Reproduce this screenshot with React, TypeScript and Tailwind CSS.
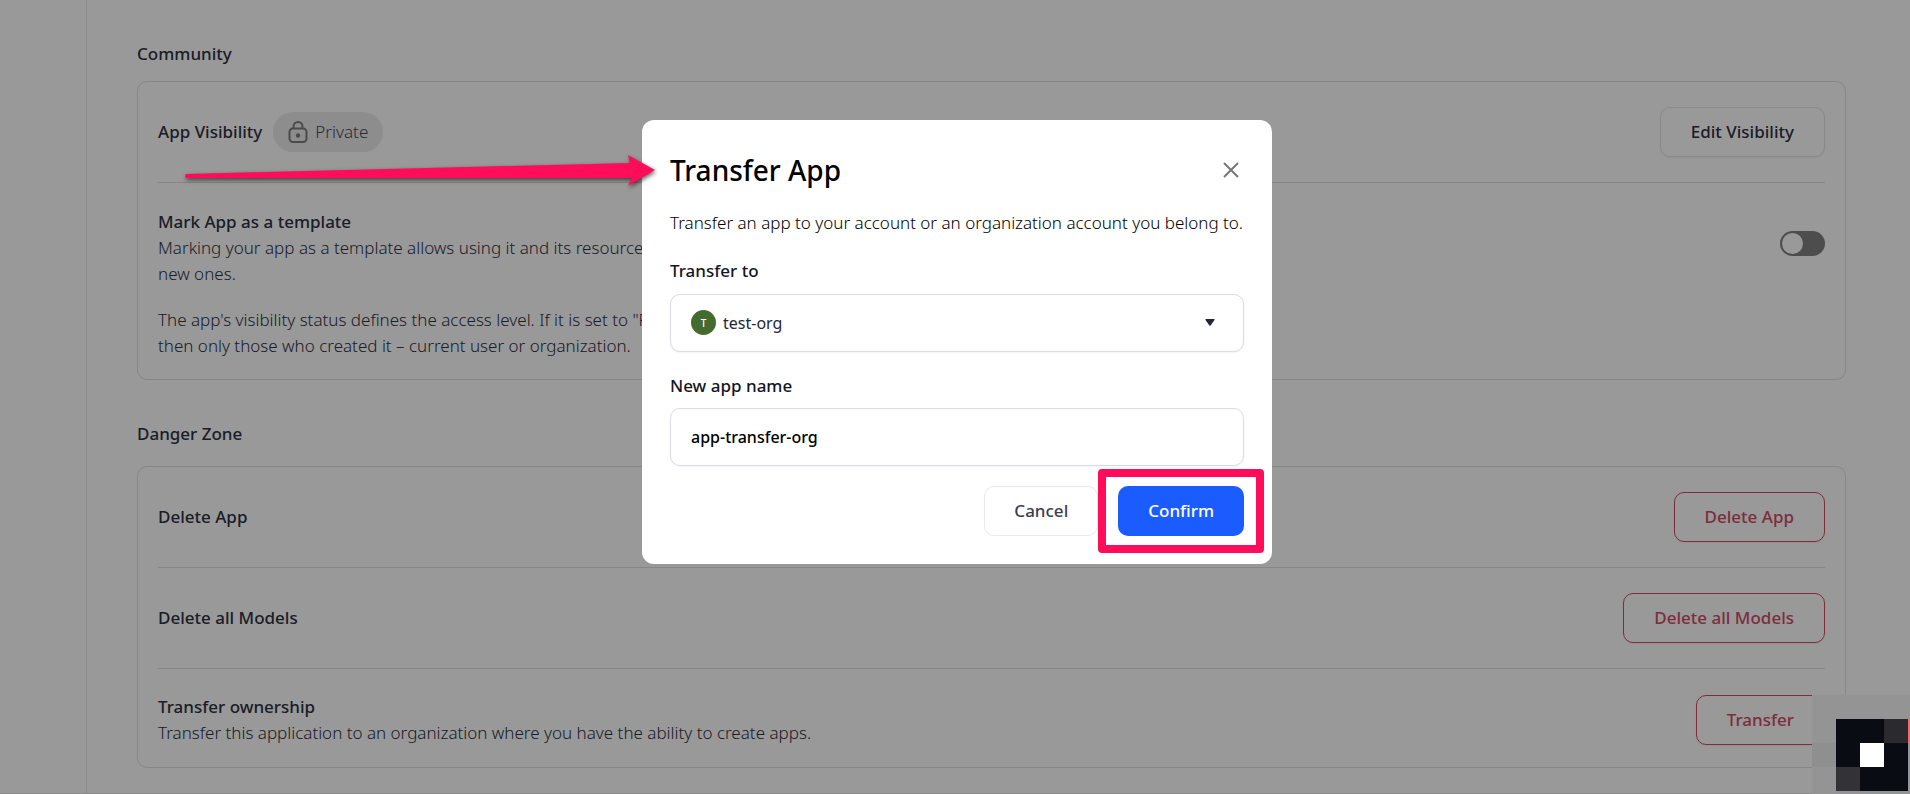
import type { ReactNode } from "react";

const FONT = "font-['Noto_Sans','Open_Sans',sans-serif]";

function Section({ title, headingClass, children }: { title: string; headingClass: string; children: ReactNode }) {
  return (
    <section>
      <h2 className={`text-[17px] leading-[26px] font-medium ${headingClass}`}>{title}</h2>
      <div className="divide-y divide-[#e0e0e5] rounded-[10px] border border-[#e0e0e5] px-5">
        {children}
      </div>
    </section>
  );
}

function DangerButton({ children }: { children: ReactNode }) {
  return (
    <button
      type="button"
      className="h-[50px] rounded-[10px] border border-[#d04c66] px-[30px] text-[17px] font-medium text-[#d04c66] shadow-xs"
    >
      {children}
    </button>
  );
}

function LockIcon() {
  return (
    <svg width="20" height="22" viewBox="0 0 20 22" fill="none" stroke="#7d7d7d" strokeWidth="2" aria-hidden="true">
      <rect x="1.5" y="7.5" width="17" height="13.5" rx="3.5" />
      <path d="M5.5 7.5V5.5a4.5 4.5 0 0 1 9 0V7.5" />
      <circle cx="10" cy="14.5" r="2.2" fill="#7d7d7d" stroke="none" />
    </svg>
  );
}

function SettingsPage() {
  return (
    <div className="flex min-h-screen border-b border-[#e4e4e4] bg-white text-[17px] leading-[26px] text-[#2e3142]">
      <aside className="w-[87px] shrink-0 border-r border-[#e6e6e8]" />
      <main className="flex min-w-0 flex-1 flex-col gap-[41px] pt-[41px] pr-16 pl-[50px]">
        <Section title="Community" headingClass="mb-[14px]">
          <div className="flex items-center justify-between py-[25px]">
            <div className="flex items-center gap-[11px]">
              <h3 className="font-medium">App Visibility</h3>
              <span className="flex h-10 items-center gap-[7px] rounded-full bg-[#ebebeb] px-[15px] font-light text-[#454a58]">
                <LockIcon />
                Private
              </span>
            </div>
            <button
              type="button"
              className="h-[50px] rounded-[10px] border border-[#e4e4e8] px-[30px] font-medium shadow-xs"
            >
              Edit Visibility
            </button>
          </div>
          <div className="flex items-start justify-between pt-[26px] pb-5">
            <div className="w-[760px]">
              <h3 className="font-medium">Mark App as a template</h3>
              <p className="font-[330]">
                Marking your app as a template allows using it and its resources as a base for creating
                <br />
                new ones.
              </p>
              <p className="mt-5 font-[330]">
                The app's visibility status defines the access level. If it is set to "Private",
                <br />
                then only those who created it – current user or organization.
              </p>
            </div>
            <label className="mt-[22px] flex h-[25px] w-[45px] cursor-pointer items-center rounded-full bg-[#808080] p-[2px]">
              <input type="checkbox" className="peer sr-only" aria-label="Mark App as a template" />
              <span className="size-[21px] rounded-full bg-white peer-checked:translate-x-5" />
            </label>
          </div>
        </Section>

        <Section title="Danger Zone" headingClass="mb-[19px]">
          <div className="flex items-center justify-between py-[25px]">
            <h3 className="font-medium">Delete App</h3>
            <DangerButton>Delete App</DangerButton>
          </div>
          <div className="flex items-center justify-between py-[25px]">
            <h3 className="font-medium">Delete all Models</h3>
            <DangerButton>Delete all Models</DangerButton>
          </div>
          <div className="flex items-center justify-between pt-[25px] pb-[21px]">
            <div>
              <h3 className="font-medium">Transfer ownership</h3>
              <p className="font-[330]">
                Transfer this application to an organization where you have the ability to create apps.
              </p>
            </div>
            <DangerButton>Transfer</DangerButton>
          </div>
        </Section>
      </main>
    </div>
  );
}

function TransferDialog() {
  return (
    <div
      role="dialog"
      aria-modal="true"
      aria-labelledby="transfer-title"
      className="relative flex w-[630px] flex-col rounded-[12px] bg-white px-7 pt-[30px] pb-7 text-[17px] leading-[26px] text-[#14161f]"
    >
      <div className="flex items-center justify-between">
        <h1 id="transfer-title" className="text-[28px] leading-[40px] font-medium text-black">
          Transfer App
        </h1>
        <button type="button" aria-label="Close" className="mr-1 p-[1px]">
          <svg width="16" height="16" viewBox="0 0 16 16" stroke="#777" strokeWidth="2" aria-hidden="true">
            <path d="M1 1l14 14M15 1L1 15" />
          </svg>
        </button>
      </div>
      <p className="mt-5 font-[330] whitespace-nowrap text-black">
        Transfer an app to your account or an organization account you belong to.
      </p>

      <label htmlFor="target" className="mt-[22px] font-medium">
        Transfer to
      </label>
      <div className="relative mt-[10px]">
        <select
          id="target"
          className="h-[58px] w-full appearance-none rounded-[10px] border border-[#d9dbe6] bg-white pl-[52px] text-base text-[#23263a] shadow-xs"
        >
          <option>test-org</option>
        </select>
        <span className="pointer-events-none absolute top-4 left-[21px] flex size-[25px] items-center justify-center rounded-full bg-[#446b2f] text-[10px] font-medium text-white">
          T
        </span>
        <svg
          className="pointer-events-none absolute top-[25px] right-[29px]"
          width="10"
          height="7"
          viewBox="0 0 10 7"
          fill="#23263a"
          aria-hidden="true"
        >
          <path d="M1 0h8q1 0 .5 1L5.6 6.4q-.6.8-1.2 0L.5 1Q0 0 1 0z" />
        </svg>
      </div>

      <label htmlFor="app-name" className="mt-[21px] font-medium">
        New app name
      </label>
      <input
        id="app-name"
        defaultValue="app-transfer-org"
        className="mt-[9px] h-[58px] w-full rounded-[10px] border border-[#d9dbe6] px-5 text-base font-medium text-black shadow-xs"
      />

      <div className="mt-5 flex justify-end gap-5">
        <button
          type="button"
          className="h-[50px] rounded-[10px] border border-[#e8e8ee] px-[29px] font-medium text-[#3a3d50]"
        >
          Cancel
        </button>
        <div className="relative">
          <button type="button" className="h-[50px] rounded-[10px] bg-[#1a5cff] px-[30px] font-medium text-white">
            Confirm
          </button>
          <div className="pointer-events-none absolute -inset-x-[20px] -inset-y-[17px] rounded-[4px] border-8 border-[#ff0d5b]" />
        </div>
      </div>

      <svg
        className="pointer-events-none absolute top-[30px] -left-[461px] drop-shadow-[1px_2px_2px_rgba(0,0,0,0.6)]"
        width="480"
        height="40"
        viewBox="0 0 480 40"
        fill="#ff0d5b"
        aria-hidden="true"
      >
        <path d="M5 24Q3 26 5 28L451 28L447 36L474 20L447 5L449 13Z" />
      </svg>
    </div>
  );
}

const CELLS = [
  "bg-[#0a0c14]",
  "bg-[#0a0c14]",
  "bg-[#2b2b2f]",
  "bg-[#0a0c14]",
  "bg-white",
  "bg-[#0a0c14]",
  "bg-[#333337]",
  "bg-[#0a0c14]",
  "bg-[#0a0c14]",
];

function CornerMosaic() {
  return (
    <div className="absolute right-0 bottom-0 flex h-[99px] w-[98px] bg-[#949494] pt-6" aria-hidden="true">
      <div className="mt-6 size-6 bg-[#8f8f8f]" />
      <div className="grid size-[72px] grid-cols-3">
        {CELLS.map((c, i) => (
          <div key={i} className={c} />
        ))}
      </div>
      <div className="h-6 w-[2px] bg-[#fb6a6a]" />
    </div>
  );
}

export default function App() {
  return (
    <div className={`relative min-h-screen overflow-hidden ${FONT}`}>
      <SettingsPage />
      <div className="absolute inset-0 flex items-start justify-center bg-black/40 pt-[120px] pl-1">
        <TransferDialog />
      </div>
      <CornerMosaic />
    </div>
  );
}
